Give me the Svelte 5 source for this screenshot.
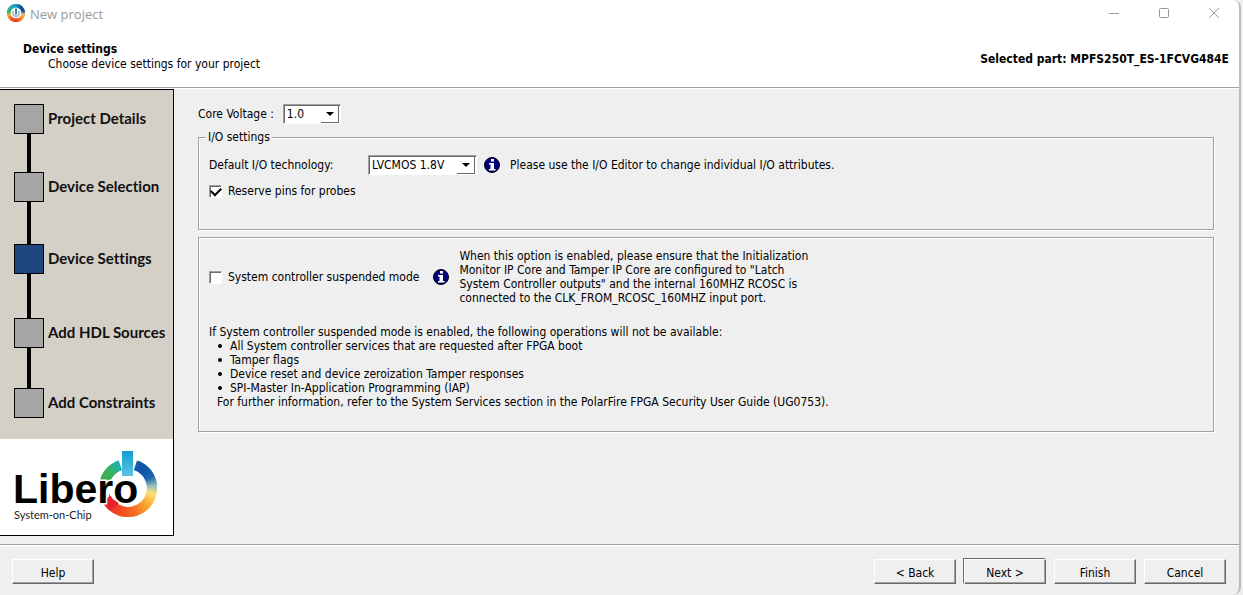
<script>
  const steps = [
    { name: 'Project Details', link: 38 },
    { name: 'Device Selection', link: 42 },
    { name: 'Device Settings', link: 44, current: true },
    { name: 'Add HDL Sources', link: 40 },
    { name: 'Add Constraints', link: 0 }
  ];
  const limits = [
    'All System controller services that are requested after FPGA boot',
    'Tamper flags',
    'Device reset and device zeroization Tamper responses',
    'SPI-Master In-Application Programming (IAP)'
  ];

  let reserve = $state(true);
  let suspended = $state(false);
  let voltage = $state('1.0');
  let technology = $state('LVCMOS 1.8V');

  // Colour stops around the logo ring; angles run clockwise from the top.
  const ringStops = [
    [0, [20, 110, 190]], [35, [14, 84, 165]], [65, [30, 100, 172]],
    [85, [150, 190, 190]], [102, [253, 226, 122]], [130, [250, 170, 50]],
    [165, [243, 112, 33]], [210, [238, 62, 36]], [245, [232, 30, 40]],
    [280, [60, 170, 70]], [310, [58, 178, 90]], [345, [26, 175, 200]], [360, [26, 165, 215]]
  ];
  const iconStops = [
    [0, [30, 150, 200]], [30, [12, 90, 160]], [75, [12, 70, 150]], [100, [240, 190, 110]],
    [130, [245, 150, 40]], [180, [230, 60, 30]], [225, [240, 90, 30]],
    [255, [240, 180, 60]], [275, [60, 180, 90]], [320, [20, 175, 180]], [360, [30, 150, 200]]
  ];

  function colourAt(stops, angle) {
    const next = Math.max(1, stops.findIndex(([a]) => a >= angle));
    const [a0, c0] = stops[next - 1];
    const [a1, c1] = stops[next];
    const t = (angle - a0) / (a1 - a0);
    return `rgb(${c0.map((v, i) => Math.round(v + (c1[i] - v) * t)).join(',')})`;
  }

  function ring(stops, cx, cy, r, from, to) {
    const parts = [];
    const at = (deg) => {
      const a = (deg * Math.PI) / 180;
      return `${(cx + r * Math.sin(a)).toFixed(2)} ${(cy - r * Math.cos(a)).toFixed(2)}`;
    };
    for (let a = from; a < to; a += 4) {
      const end = Math.min(a + 8, to);
      parts.push({ d: `M${at(a)}A${r} ${r} 0 0 1 ${at(end)}`, colour: colourAt(stops, Math.min(a + 2, 360)) });
    }
    return parts;
  }

  const logoRing = [...ring(ringStops, 128, 49, 24, 18, 244), ...ring(ringStops, 128, 49, 24, 285, 341)];
  const iconRing = ring(iconStops, 9, 9, 7.25, 0, 360);
</script>

{#snippet info()}
  <svg class="info" width="16" height="16" viewBox="0 0 16 16" aria-hidden="true">
    <circle cx="8" cy="8" r="7.5" fill="#000080" stroke="#000" />
    <path fill="#fff" d="M7 2h3v2.500H7zM5 6h5v6h1.500v1.500H5V12h1.500V7.500H5z" />
  </svg>
{/snippet}

<div class="window">
  <header class="titlebar">
    <svg width="18" height="18" viewBox="0 0 18 18" aria-hidden="true">
      {#each iconRing as part}
        <path d={part.d} stroke={part.colour} stroke-width="3.5" fill="none" />
      {/each}
      <path d="M6.500 7a3.200 3.200 0 1 0 5 0" stroke="#a3bcc8" stroke-width="1.500" fill="none" />
      <path d="M9 4.500v6" stroke="#3e86a8" stroke-width="2" />
    </svg>
    <span class="title">New project</span>
    <button class="win" aria-label="Minimize"><svg width="12" height="12" viewBox="0 0 12 12"><path d="M1 6.500h10" /></svg></button>
    <button class="win" aria-label="Maximize"><svg width="12" height="12" viewBox="0 0 12 12"><rect x="1.500" y="1.500" width="9" height="9" rx="1" /></svg></button>
    <button class="win" aria-label="Close"><svg width="12" height="12" viewBox="0 0 12 12"><path d="M1 1l10 10M11 1L1 11" /></svg></button>
  </header>

  <section class="banner">
    <div>
      <h1>Device settings</h1>
      <p class="sub">Choose device settings for your project</p>
    </div>
    <p class="part">Selected part: MPFS250T_ES-1FCVG484E</p>
  </section>

  <main>
    <aside>
      <ol class="steps">
        {#each steps as step}
          <li aria-current={step.current ? 'step' : undefined}>
            <span class="row"><span class="box" class:current={step.current}></span><span class="name">{step.name}</span></span>
            {#if step.link}<span class="link" style="height: {step.link}px"></span>{/if}
          </li>
        {/each}
      </ol>
      <svg class="logo" width="172" height="96" viewBox="0 0 172 96" role="img" aria-label="Libero System-on-Chip">
        <defs>
          <linearGradient id="bar" x1="0" y1="0" x2="0" y2="1">
            <stop offset="0" stop-color="#0f9fd0" /><stop offset="1" stop-color="#5cc4e4" />
          </linearGradient>
        </defs>
        {#each logoRing as part}
          <path d={part.d} stroke={part.colour} stroke-width="10" fill="none" />
        {/each}
        <path d="M109 54l2 5 8 5-9 7-5-8 4-1z" fill="#e8202a" />
        <rect x="122" y="12" width="11" height="25" fill="url(#bar)" />
        <text class="word" x="13" y="64">Libero</text>
        <text class="tag" x="14" y="80">System-on-Chip</text>
      </svg>
    </aside>

    <form class="content" onsubmit={(e) => e.preventDefault()}>
      <div class="line voltage">
        <label for="voltage">Core Voltage :</label>
        <span class="combo small">
          <select id="voltage" bind:value={voltage}><option>1.0</option><option>1.05</option></select>
        </span>
      </div>

      <fieldset class="group io">
        <legend>I/O settings</legend>
        <div class="line">
          <label class="tech" for="technology">Default I/O technology:</label>
          <span class="combo">
            <select id="technology" bind:value={technology}><option>LVCMOS 1.8V</option><option>LVCMOS 3.3V</option></select>
          </span>
          {@render info()}
          <span class="note">Please use the I/O Editor to change individual I/O attributes.</span>
        </div>
        <label class="check"><input type="checkbox" bind:checked={reserve} />Reserve pins for probes</label>
      </fieldset>

      <section class="group mode">
        <div class="line">
          <label class="check"><input type="checkbox" bind:checked={suspended} />System controller suspended mode</label>
          {@render info()}
          <p class="note">When this option is enabled, please ensure that the Initialization<br />Monitor IP Core and Tamper IP Core are configured to "Latch<br />System Controller outputs" and the internal 160MHZ RCOSC is<br />connected to the CLK_FROM_RCOSC_160MHZ input port.</p>
        </div>
        <div class="ops">
          <p>If System controller suspended mode is enabled, the following operations will not be available:</p>
          <ul>
            {#each limits as limit}<li>{limit}</li>{/each}
          </ul>
          <p class="more">For further information, refer to the System Services section in the PolarFire FPGA Security User Guide (UG0753).</p>
        </div>
      </section>
    </form>
  </main>

  <footer>
    <button class="push help">Help</button>
    <button class="push">&lt; Back</button>
    <button class="push default">Next &gt;</button>
    <button class="push">Finish</button>
    <button class="push">Cancel</button>
  </footer>
</div>

<style>
  :global(body) { background: #eee; }
  * { box-sizing: border-box; }
  h1, p, ul, ol { margin: 0; padding: 0; font-size: inherit; }
  ul, ol { list-style: none; }
  button, select { font: inherit; color: inherit; }

  .window {
    display: flex;
    flex-direction: column;
    min-height: 100vh;
    margin-right: 2px;
    border-right: 2px solid #bbb;
    border-radius: 0 8px 8px 0;
    background: #efefef;
    color: #000;
    font: 12px/14px "DejaVu Sans Condensed", "DejaVu Sans", sans-serif;
    overflow: hidden;
  }

  .titlebar {
    display: flex;
    align-items: center;
    height: 26px;
    padding: 0 0 0 7px;
    background: #fff;
  }
  .title { flex: 1; margin-left: 5px; padding-top: 2px; color: #999; font: 13px/18px "Open Sans", sans-serif; }
  .win { display: grid; place-items: center; width: 50px; height: 26px; padding: 0; border: 0; background: none; }
  .win svg { fill: none; stroke: #999; }

  .banner {
    display: flex;
    justify-content: space-between;
    align-items: center;
    height: 62px;
    padding: 0 10px 0 23px;
    background: #fff;
    border-bottom: 1px solid #a0a0a0;
  }
  h1, .part { font-weight: bold; }
  h1 { margin-bottom: 1px; }
  .part { padding-top: 4px; }
  .sub { padding-left: 25px; }

  main { display: flex; flex: 1; border-top: 1px solid #fff; }
  aside {
    display: flex;
    flex-direction: column;
    width: 174px;
    margin-bottom: 8px;
    border: 1px solid #000;
    border-left: 0;
    background: #fff;
  }
  .steps {
    flex: 1;
    padding: 14px 0 0 14px;
    background: #d4d0c8;
    color: #111;
    font: bold 15px/20px Lato, sans-serif;
    font-variant-ligatures: none;
  }
  .row { display: flex; align-items: center; gap: 4px; }
  .name { padding-bottom: 3px; }
  .box { width: 30px; height: 30px; border: 1px solid #000; background: #a5a5a5; }
  .box.current { background: #1f477d; }
  .link { display: block; width: 4px; margin-left: 13px; background: #000; }
  .logo { display: block; }
  .word { font: bold 41px "Liberation Sans", Arial, sans-serif; fill: #000; stroke: #fff; stroke-width: 3px; paint-order: stroke; }
  .tag { font: 11px Lato, sans-serif; fill: #222; }

  .content { flex: 1; padding: 15px 25px 0 24px; }
  .line { display: flex; align-items: center; }
  .voltage { gap: 9px; margin-bottom: 6px; }

  .combo { position: relative; display: block; width: 109px; }
  .combo.small { width: 58px; }
  .combo::after {
    content: "";
    position: absolute;
    right: 7px;
    top: 8px;
    border: 4px solid transparent;
    border-top-color: #000;
    border-bottom: 0;
    pointer-events: none;
  }
  .combo::before {
    content: "";
    position: absolute;
    right: 2px;
    top: 2px;
    width: 17px;
    height: 16px;
    border-right: 1px solid #696969;
    border-bottom: 1px solid #696969;
    pointer-events: none;
  }
  select {
    appearance: none;
    display: block;
    width: 100%;
    height: 20px;
    padding: 0 0 0 3px;
    border: 1px solid;
    border-color: #a0a0a0 #fff #fff #a0a0a0;
    border-radius: 0;
    background: #fff;
    box-shadow: inset 1px 1px 0 #696969;
  }

  .group {
    min-width: 0;
    margin: 0;
    padding: 0 10px;
    border: 1px solid #a0a0a0;
    box-shadow: 1px 1px 0 #fff, inset 1px 1px 0 #fff;
  }
  .io { height: 100px; }
  legend { margin-left: -3px; padding: 0 2px; background: #efefef; }
  .io .line { margin: 11px 0 9px; }
  .tech { width: 159px; }
  .info { flex: none; margin: 0 10px 0 7px; }
  .check { display: flex; align-items: center; gap: 6px; }
  .check input {
    appearance: none;
    display: grid;
    place-items: center;
    width: 13px;
    height: 13px;
    margin: 0;
    border: 1px solid;
    border-color: #a0a0a0 #fff #fff #a0a0a0;
    background: #fff;
    box-shadow: inset 1px 1px 0 #696969;
  }
  .check input:checked::after {
    content: "";
    width: 8px;
    height: 5px;
    margin-bottom: 2px;
    border: solid #000;
    border-width: 0 0 2px 2px;
    transform: rotate(-45deg);
  }

  .mode { margin-top: 7px; padding: 11px 10px 22px; }
  .mode .info { margin-left: 14px; }
  .ops { margin-top: 20px; }
  .ops li { display: flex; align-items: center; padding-left: 9px; }
  .ops li::before { content: ""; width: 4px; height: 4px; margin-right: 8px; border-radius: 50%; background: #000; }
  .more { padding-left: 8px; }

  footer {
    display: flex;
    gap: 8px;
    height: 51px;
    padding: 14px 13px 0 12px;
    border-top: 1px solid #a0a0a0;
    box-shadow: inset 0 1px 0 #fff;
  }
  .push {
    width: 82px;
    height: 25px;
    padding: 2px 0 0;
    border: 1px solid;
    border-color: #fff #696969 #696969 #fff;
    background: #efefef;
    box-shadow: inset -1px -1px 0 #a0a0a0;
  }
  .push.default { box-shadow: inset -1px -1px 0 #a0a0a0, -1px -1px 0 #696969; }
  .help { margin-right: auto; }
</style>
